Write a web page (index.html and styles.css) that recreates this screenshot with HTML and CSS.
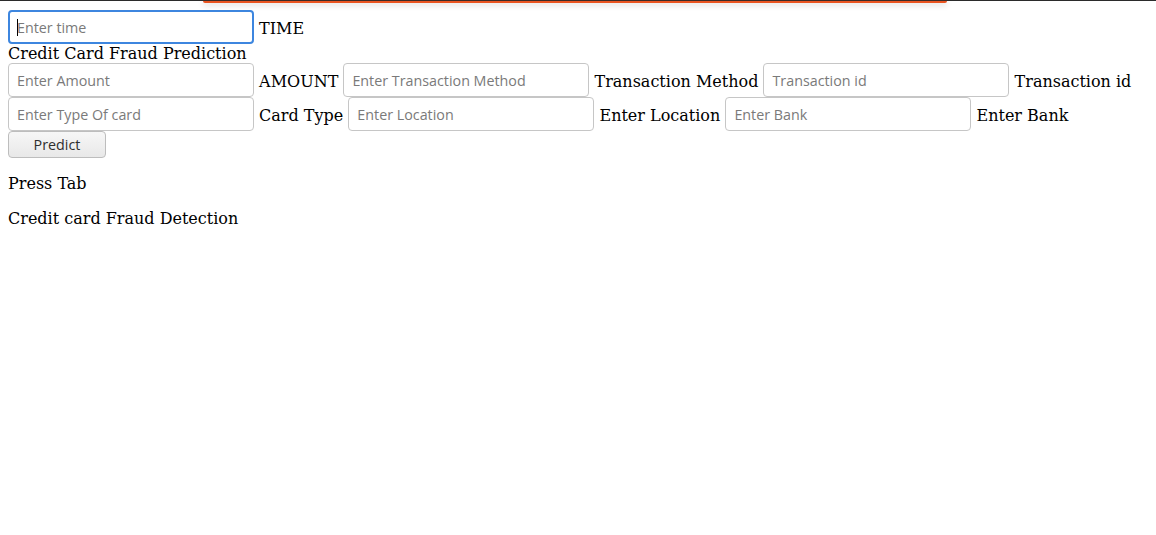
FILE: index.html
```html
<!DOCTYPE html>
<html>
<head>
<meta charset="utf-8">
<title>Credit Card Fraud Prediction</title>
<link rel="stylesheet" href="styles.css">
</head>
<body>
<div class="topline"></div>
<div class="topbar"></div>
<form class="form">
<input class="field field-focused" type="text" placeholder="Enter time"> TIME<br>
Credit Card Fraud Prediction<br>
<input class="field" type="text" placeholder="Enter Amount"> AMOUNT <input class="field" type="text" placeholder="Enter Transaction Method"> Transaction Method <input class="field" type="text" placeholder="Transaction id"> Transaction id<br>
<input class="field" type="text" placeholder="Enter Type Of card"> Card Type <input class="field" type="text" placeholder="Enter Location"> Enter Location <input class="field" type="text" placeholder="Enter Bank"> Enter Bank<br>
<button class="btn" type="button">Predict</button>
</form>
<p class="para">Press Tab</p>
<p class="para">Credit card Fraud Detection</p>
</body>
</html>
```
FILE: styles.css
```css
html, body {
  background: #ffffff;
}
body {
  margin: 8px;
  font-family: "DejaVu Serif", serif;
  font-size: 16px;
  color: #000000;
}
.topline {
  position: absolute;
  left: 0;
  top: 0;
  width: 100%;
  height: 1px;
  background: #2b2b2b;
}
.topbar {
  position: absolute;
  left: 203px;
  top: 0;
  width: 744px;
  height: 3px;
  background: #e95420;
  border-top: 1px solid #3a2a26;
  box-sizing: border-box;
  border-radius: 0 0 2px 2px;
  box-shadow: 0 2px 6px rgba(0, 0, 0, 0.18);
}
.form {
  margin: 0;
}
.field {
  box-sizing: border-box;
  width: 246px;
  height: 34px;
  margin: 0;
  padding: 0 8px;
  border: 1px solid #c6c6c6;
  border-radius: 4px;
  font-family: "Open Sans", "Noto Sans", sans-serif;
  font-size: 14.3px;
  color: #333333;
  background: #ffffff;
  outline: none;
  vertical-align: 1px;
}
.field::placeholder {
  color: #7a7a7a;
}
.field-focused {
  border: 2px solid #3d86df;
  padding: 0 7px;
  margin-top: 2px;
  background: linear-gradient(#000000, #000000) no-repeat 7px 7px / 1px 17px, #ffffff;
}
.btn {
  box-sizing: border-box;
  width: 98px;
  height: 27px;
  margin: 0;
  padding: 0;
  border: 1px solid #bdbdbd;
  border-radius: 4px;
  background: linear-gradient(#f7f7f7, #e8e8e8);
  font-family: "Open Sans", "Noto Sans", sans-serif;
  font-size: 14.3px;
  color: #2e2e2e;
}
.para {
  margin: 16px 0;
}
```
